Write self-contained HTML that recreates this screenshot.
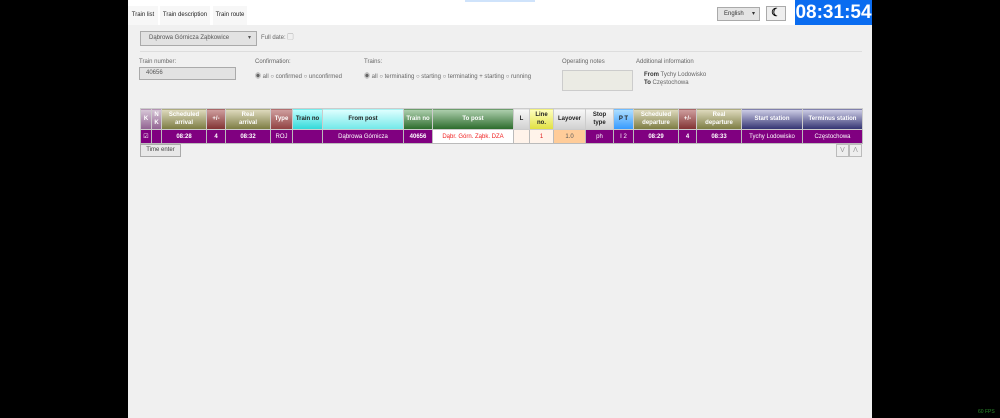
<!DOCTYPE html>
<html><head><meta charset="utf-8"><style>
*{box-sizing:border-box;margin:0;padding:0}
body{width:1000px;height:418px;background:#000;font-family:"Liberation Sans","Noto Sans CJK JP",sans-serif;position:relative;overflow:hidden;color:#555}
.page{position:absolute;left:128px;top:0;width:744px;height:418px;background:#f0f0f0}
.top{position:absolute;left:0;top:0;width:744px;height:25px;background:#fff}
.tab{position:absolute;top:6px;height:19px;background:#f7f7f7;font-size:6px;color:#222;line-height:19px;text-align:center}
.abs{position:absolute}
.small{font-size:6px;color:#666}
.clock{position:absolute;left:667px;top:0;width:77px;height:25px;background:#0a6cf0;color:#fff;font-weight:bold;font-size:19px;line-height:25px;text-align:center}
table{position:absolute;left:12px;top:108px;border-collapse:collapse;table-layout:fixed;width:722px}
th,td{border:1px solid #ccc;font-size:6px;text-align:center;padding:0;overflow:hidden;white-space:nowrap}
th{height:21px;color:#fff;font-weight:bold;line-height:8px}
td{height:14px;background:#800080;color:#fff;border-color:#bbb}
.dk{color:#222}
.b{font-weight:bold}
</style></head><body>
<div class="page">
<div class="top"></div>
<div class="abs" style="left:337px;top:0;width:70px;height:2px;background:#cfe3fb"></div>
<div class="tab" style="left:0;width:30px">Train list</div>
<div class="tab" style="left:32px;width:50px">Train description</div>
<div class="tab" style="left:85px;width:34px">Train route</div>
<div class="abs" style="left:589px;top:7px;width:43px;height:14px;background:#e4e4e4;border:1px solid #aaa;font-size:6px;color:#333;line-height:12px;padding-left:6px">English <span style="position:absolute;right:4px">▾</span></div>
<div class="abs" style="left:638px;top:6px;width:20px;height:15px;background:#eee;border:1px solid #aaa;text-align:center;line-height:13px;font-size:11px;font-weight:bold;color:#000">☾</div>
<div class="clock">08:31:54</div>

<div class="abs" style="left:12px;top:31px;width:117px;height:15px;background:#e2e2e2;border:1px solid #aaa;font-size:6px;color:#555;line-height:13px;padding-left:8px">Dąbrowa Górnicza Ząbkowice<span style="position:absolute;right:5px">▾</span></div>
<div class="abs small" style="left:133px;top:32px">Full date: ▢</div>
<div class="abs" style="left:12px;top:51px;width:722px;height:1px;background:#ddd"></div>
<div class="abs small" style="left:11px;top:59px">Train number:</div>
<div class="abs" style="left:11px;top:67px;width:97px;height:13px;background:#e2e2e2;border:1px solid #aaa;font-size:6px;color:#555;line-height:11px;padding-left:6px">40656</div>
<div class="abs small" style="left:127px;top:59px">Confirmation:</div>
<div class="abs small" style="left:127px;top:71px">◉ all ○ confirmed ○ unconfirmed</div>
<div class="abs small" style="left:236px;top:59px">Trains:</div>
<div class="abs small" style="left:236px;top:71px">◉ all ○ terminating ○ starting ○ terminating + starting ○ running</div>
<div class="abs small" style="left:434px;top:59px">Operating notes</div>
<div class="abs" style="left:434px;top:70px;width:71px;height:21px;background:#ebebe4;border:1px solid #ccc"></div>
<div class="abs small" style="left:508px;top:59px">Additional information</div>
<div class="abs small" style="left:516px;top:72px"><b style="color:#333">From</b> Tychy Lodowisko</div>
<div class="abs small" style="left:516px;top:80px"><b style="color:#333">To</b> Częstochowa</div>

<table>
<colgroup><col style="width:11px"><col style="width:10px"><col style="width:45px"><col style="width:19px"><col style="width:45px"><col style="width:22px"><col style="width:30px"><col style="width:81px"><col style="width:29px"><col style="width:81px"><col style="width:16px"><col style="width:24px"><col style="width:32px"><col style="width:28px"><col style="width:20px"><col style="width:45px"><col style="width:18px"><col style="width:45px"><col style="width:61px"><col style="width:60px"></colgroup>
<tr>
<th style="background:linear-gradient(#d8c8d8,#906090)">K</th>
<th style="background:linear-gradient(#d8c8d8,#906090)">N<br>K</th>
<th style="background:linear-gradient(#e0dcc0,#7a7a40)">Scheduled<br>arrival</th>
<th style="background:linear-gradient(#d0a0a0,#803030)">+/-</th>
<th style="background:linear-gradient(#e0dcc0,#7a7a40)">Real<br>arrival</th>
<th style="background:linear-gradient(#d0a0a0,#904040)">Type</th>
<th class="dk" style="background:linear-gradient(#c0ffff,#30d8d8)">Train no</th>
<th class="dk" style="background:linear-gradient(#e0ffff,#70e8e8)">From post</th>
<th style="background:linear-gradient(#b0d0b0,#2a6a2a)">Train no</th>
<th style="background:linear-gradient(#b0d0b0,#2a6a2a)">To post</th>
<th class="dk" style="background:linear-gradient(#f8f8f8,#d0d0d0)">L</th>
<th class="dk" style="background:linear-gradient(#ffffc0,#e0e040)">Line<br>no.</th>
<th class="dk" style="background:linear-gradient(#f8f8f8,#d0d0d0)">Layover</th>
<th class="dk" style="background:linear-gradient(#f8f8f8,#d0d0d0)">Stop<br>type</th>
<th class="dk" style="background:linear-gradient(#b0e0ff,#3399ff)">P T</th>
<th style="background:linear-gradient(#e0dcc0,#7a7a40)">Scheduled<br>departure</th>
<th style="background:linear-gradient(#d0a0a0,#803030)">+/-</th>
<th style="background:linear-gradient(#e0dcc0,#7a7a40)">Real<br>departure</th>
<th style="background:linear-gradient(#d0d0e8,#303070)">Start station</th>
<th style="background:linear-gradient(#d0d0e8,#303070)">Terminus station</th>
</tr>
<tr>
<td>☑</td><td></td><td class="b">08:28</td><td class="b">4</td><td class="b">08:32</td><td>ROJ</td><td></td><td>Dąbrowa Górnicza</td><td style="font-weight:bold">40656</td>
<td style="background:#fff;color:#f02020">Dąbr. Górn. Ząbk. DZA</td>
<td style="background:#fff3ea"></td>
<td style="background:#fff3ea;color:#e02020">1</td>
<td style="background:#ffcc99;color:#555">1.0</td>
<td>ph</td><td>I 2</td><td class="b">08:29</td><td class="b">4</td><td class="b">08:33</td><td>Tychy Lodowisko</td><td>Częstochowa</td>
</tr>
</table>
<div class="abs" style="left:12px;top:144px;width:41px;height:13px;background:#e8e8e8;border:1px solid #aaa;font-size:6px;color:#444;line-height:11px;text-align:center">Time enter</div>
<div class="abs" style="left:708px;top:144px;width:13px;height:13px;background:#eee;border:1px solid #bbb;font-size:7px;color:#999;line-height:11px;text-align:center">V</div>
<div class="abs" style="left:721px;top:144px;width:13px;height:13px;background:#eee;border:1px solid #bbb;font-size:7px;color:#999;line-height:11px;text-align:center">Λ</div>
</div>
<div class="abs" style="left:978px;top:409px;font-size:5px;color:#2a8a2a">60 FPS</div>
</body></html>
